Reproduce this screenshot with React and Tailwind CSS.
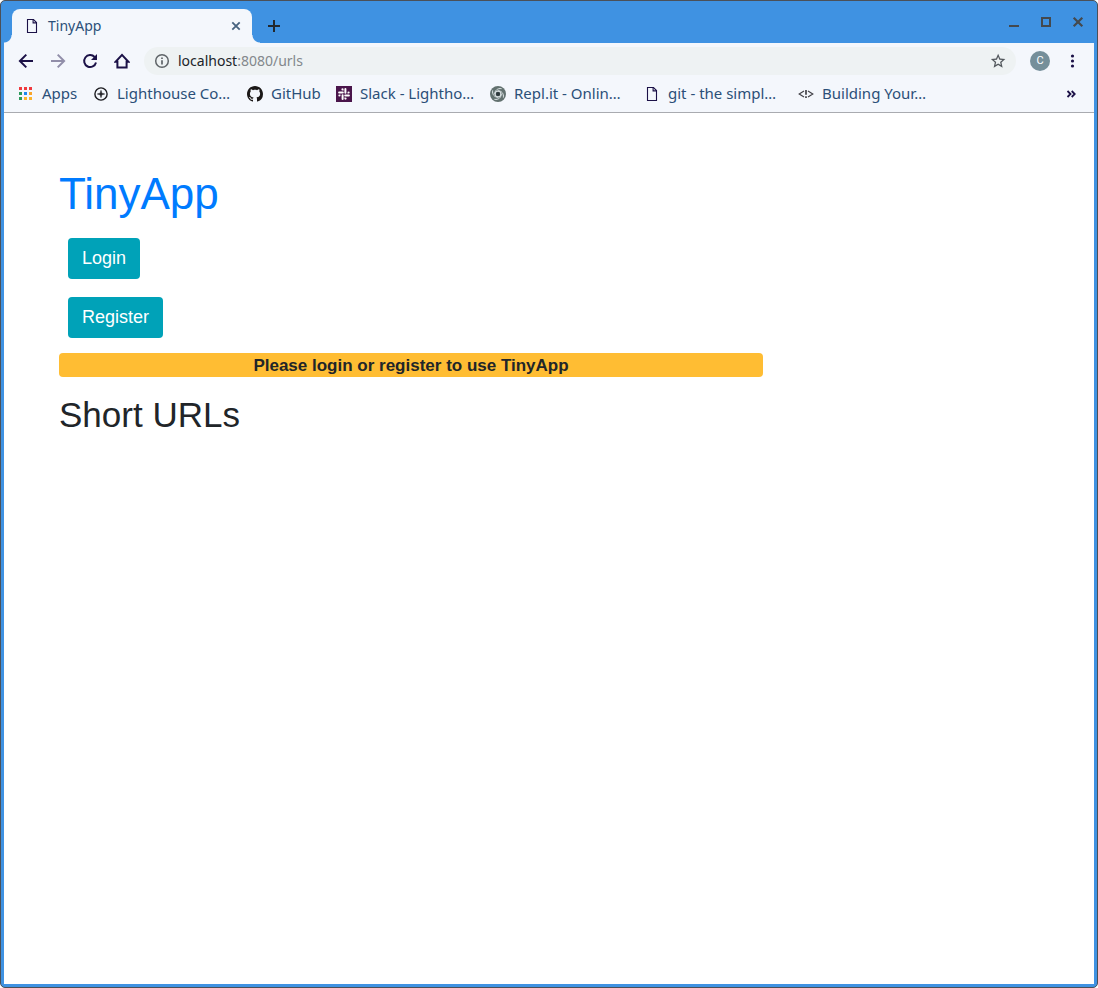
import React from "react";

const NAVY = "#1b1147";

function FileIcon() {
  return (
    <svg width="16" height="16" viewBox="0 0 16 16" fill="none" stroke={NAVY} strokeWidth="1.1" className="shrink-0">
      <path d="M3.5 1.5h6l3 3v10h-9z" />
      <path d="M9.1 1.6v3.3h3.3" />
    </svg>
  );
}

function AppsIcon() {
  const colors = [
    "#f03a3e", "#f03a3e", "#f03a3e",
    "#2c9a5b", "#1e88f0", "#f9a52b",
    "#2c9a5b", "#fbb42c", "#fbb42c",
  ];
  return (
    <svg width="16" height="16" viewBox="0 0 16 16" className="shrink-0">
      {colors.map((c, i) => (
        <rect key={i} x={1 + (i % 3) * 5} y={1 + Math.floor(i / 3) * 5} width="3" height="3" fill={c} />
      ))}
    </svg>
  );
}

function CompassIcon() {
  return (
    <svg width="16" height="16" viewBox="0 0 16 16" className="shrink-0">
      <circle cx="8" cy="8" r="6.1" fill="none" stroke="#1c1c20" strokeWidth="1.4" />
      <path d="M8 4.3l.8 2.9 2.9.8-2.900.8-.8 2.900-.8-2.900L4.300 8l2.900-.8z" fill="#1c1c20" stroke="#1c1c20" strokeWidth=".5" />
    </svg>
  );
}

function GitHubIcon() {
  return (
    <svg width="16" height="16" viewBox="0 0 16 16" fill="#1b1817" className="shrink-0">
      <path d="M8 0C3.58 0 0 3.58 0 8c0 3.54 2.29 6.53 5.47 7.59.4.07.55-.17.55-.38 0-.19-.01-.82-.01-1.49-2.01.37-2.53-.49-2.69-.94-.09-.23-.48-.94-.82-1.13-.28-.15-.68-.52-.01-.53.63-.01 1.08.58 1.23.82.72 1.21 1.87.87 2.33.66.07-.52.28-.87.51-1.07-1.78-.2-3.64-.89-3.64-3.95 0-.87.31-1.59.82-2.15-.08-.2-.36-1.02.08-2.12 0 0 .67-.21 2.2.82.64-.18 1.32-.27 2-.27s1.36.09 2 .27c1.53-1.04 2.2-.82 2.2-.82.44 1.1.16 1.92.08 2.12.51.56.82 1.27.82 2.15 0 3.07-1.87 3.75-3.65 3.95.29.25.54.73.54 1.48 0 1.07-.01 1.93-.01 2.2 0 .21.15.46.55.38A8.01 8.01 0 0 0 16 8c0-4.42-3.58-8-8-8z" />
    </svg>
  );
}

function SlackIcon() {
  return (
    <svg width="16" height="16" viewBox="0 0 16 16" className="shrink-0">
      <rect width="16" height="16" fill="#4a154b" />
      <g stroke="#fff" strokeWidth="2" strokeLinecap="round">
        <path d="M3.1 6.600h3.700M9.400 3.100v3.700M9.200 9.400h3.700M6.600 9.200v3.700" />
      </g>
      <g fill="#fff">
        <path d="M7.600 4.500H6.500a1.100 1.100 0 1 1 1.100-1.100z" />
        <path d="M11.500 7.600V6.500a1.100 1.100 0 1 1 1.100 1.100z" />
        <path d="M8.400 11.500h1.100a1.100 1.100 0 1 1-1.100 1.100z" />
        <path d="M4.500 8.400v1.100a1.100 1.100 0 1 1-1.100-1.100z" />
      </g>
    </svg>
  );
}

function ReplitIcon() {
  return (
    <svg width="16" height="16" viewBox="0 0 16 16" fill="none" className="shrink-0">
      <circle cx="8" cy="8" r="8" fill="#62716f" />
      <g stroke="#dfe6e8" strokeWidth="1" strokeLinecap="round">
        <path d="M4.700 8C4.700 4.500 7.500 2 11.200 2.600" />
        <path d="M8 4.700c3.500 0 6 2.800 5.400 6.500" />
        <path d="M11.300 8c0 3.500-2.800 6-6.500 5.400" />
        <path d="M8 11.300c-3.500 0-6-2.800-5.400-6.500" />
      </g>
      <circle cx="8" cy="8" r="2.900" stroke="#dfe6e8" strokeWidth="1" />
      <circle cx="8" cy="8" r="2" fill="#2d383b" />
    </svg>
  );
}

function TagIcon() {
  return (
    <svg width="16" height="16" viewBox="0 0 16 16" fill="none" stroke="#424248" strokeWidth="1.2" className="shrink-0">
      <path d="M6 4.900L1.200 8 6 11.100M10 4.900L14.800 8 10 11.100" />
      <path d="M8 4v4.800M8 10.200v1.900" strokeWidth="1.700" />
    </svg>
  );
}

function NavButton({ label, faded, children }) {
  return (
    <button type="button" aria-label={label} className={faded ? "opacity-45" : ""}>
      <svg width="16" height="16" viewBox="0 0 16 16" fill="none" stroke={NAVY} strokeWidth="2">
        {children}
      </svg>
    </button>
  );
}

const bookmarks = [
  { label: "Apps", Icon: AppsIcon, width: "w-[75px]" },
  { label: "Lighthouse Co…", Icon: CompassIcon, width: "w-[154px]" },
  { label: "GitHub", Icon: GitHubIcon, width: "w-[89px]" },
  { label: "Slack - Lightho…", Icon: SlackIcon, width: "w-[154px]" },
  { label: "Repl.it - Onlin…", Icon: ReplitIcon, width: "w-[154px]" },
  { label: "git - the simpl…", Icon: FileIcon, width: "w-[154px]" },
  { label: "Building Your…", Icon: TagIcon, width: "w-[154px]" },
];

function TitleBar() {
  return (
    <header className="flex h-[41px] items-end justify-between pl-2 pr-2">
      <div className="flex h-full items-end">
        <div className="relative flex h-[34px] w-[240px] items-center gap-2 rounded-t-lg bg-[#f4f7fc] pl-3 pr-2">
          <span className="absolute bottom-0 -left-2 size-2 bg-[radial-gradient(circle_at_0_0,#3f92e2_7px,#f4f7fc_8px)]" />
          <span className="absolute bottom-0 -right-2 size-2 bg-[radial-gradient(circle_at_100%_0,#3f92e2_7px,#f4f7fc_8px)]" />
          <FileIcon />
          <span className="flex-1 pb-0.5 text-[14px] text-[#2b4f78]">TinyApp</span>
          <button type="button" aria-label="Close tab">
            <svg width="16" height="16" viewBox="0 0 16 16" stroke="#46627f" strokeWidth="1.8">
              <path d="M4.300 4.300l7.400 7.400M11.700 4.300l-7.400 7.400" />
            </svg>
          </button>
        </div>
        <button type="button" aria-label="New tab" className="mb-[9px] ml-[14px]">
          <svg width="16" height="16" viewBox="0 0 16 16" stroke="#23282d" strokeWidth="2">
            <path d="M8 2v12M2 8h12" />
          </svg>
        </button>
      </div>
      <div className="flex gap-4 self-center pb-0.5">
        <button type="button" aria-label="Minimize">
          <svg width="16" height="16" viewBox="0 0 16 16" fill="#44494e">
            <rect x="3" y="11" width="10" height="2" />
          </svg>
        </button>
        <button type="button" aria-label="Maximize">
          <svg width="16" height="16" viewBox="0 0 16 16" fill="none" stroke="#44494e" strokeWidth="2">
            <rect x="4" y="4" width="8" height="8" />
          </svg>
        </button>
        <button type="button" aria-label="Close window">
          <svg width="16" height="16" viewBox="0 0 16 16" stroke="#44494e" strokeWidth="2.2">
            <path d="M3.700 3.700l8.600 8.600M12.300 3.700l-8.600 8.600" />
          </svg>
        </button>
      </div>
    </header>
  );
}

function Toolbar() {
  return (
    <div className="flex h-9 items-center justify-between gap-[14px] pl-[14px] pr-[14px]">
      <div className="flex gap-4">
        <NavButton label="Back">
          <path d="M15 8H2.400M8.300 1.600L1.900 8l6.400 6.400" />
        </NavButton>
        <NavButton label="Forward" faded>
          <path d="M1 8h12.600M7.700 1.600L14.100 8l-6.400 6.400" />
        </NavButton>
        <NavButton label="Reload">
          <path d="M12.600 4A6 6 0 1 0 14 9.500" />
          <path d="M15 1v6H9z" fill={NAVY} stroke="none" />
        </NavButton>
        <NavButton label="Home">
          <path d="M3.400 14.500V8.800H1.600L8 1.900l6.400 6.900h-1.800v5.700z" />
        </NavButton>
      </div>
      <div className="flex h-7 flex-1 items-center gap-2 rounded-full bg-[#eef2f3] px-[10px]">
        <svg width="16" height="16" viewBox="0 0 16 16" fill="none" stroke="#5f6468" strokeWidth="1.5">
          <circle cx="8" cy="8" r="6.300" />
          <path d="M8 7.200v4.200M8 4.400v1.500" strokeWidth="1.700" />
        </svg>
        <a href="#urls" className="flex-1 pb-0.5 text-[14px] text-[#83888c]">
          <span className="text-[#202428]">localhost</span>:8080/urls
        </a>
        <button type="button" aria-label="Bookmark this page">
          <svg width="16" height="16" viewBox="0 0 24 24" fill="#53585d">
            <path d="M23 9.100l-7.700-.7L12.200 1.200l-3.100 7.200L1.300 9.100l5.900 5.100L5.400 22l6.800-4.100L19 22l-1.800-7.800zM12.200 15.700l-4 2.400 1.100-4.600-3.500-3.100 4.600-.4 1.800-4.200 1.800 4.200 4.600.4-3.500 3.100 1.100 4.600z" />
          </svg>
        </button>
      </div>
      <div className="flex items-center gap-[14px]">
        <button type="button" aria-label="Profile" className="flex size-5 items-center justify-center rounded-full bg-[#758f9a] font-[Roboto,sans-serif] text-[11px] text-white">
          C
        </button>
        <button type="button" aria-label="Menu">
          <svg width="16" height="16" viewBox="0 0 16 16" fill={NAVY}>
            <circle cx="8.500" cy="3" r="1.600" />
            <circle cx="8.500" cy="8" r="1.600" />
            <circle cx="8.500" cy="13" r="1.600" />
          </svg>
        </button>
      </div>
    </div>
  );
}

function BookmarksBar() {
  return (
    <nav className="flex h-[34px] items-center justify-between border-b border-[#a9abb0] pb-1 pl-[14px] pr-[15px]">
      <div className="flex">
        {bookmarks.map(({ label, Icon, width }) => (
          <a key={label} href="#bookmark" className={"flex shrink-0 items-center gap-2 whitespace-nowrap text-[15px] text-[#2b4f78] " + width}>
            <Icon />
            {label}
          </a>
        ))}
      </div>
      <button type="button" aria-label="More bookmarks">
        <svg width="16" height="16" viewBox="0 0 16 16" fill="none" stroke={NAVY} strokeWidth="1.800">
          <path d="M4.500 5l3 3-3 3M8.700 5l3 3-3 3" />
        </svg>
      </button>
    </nav>
  );
}

const primaryButton = "rounded-[4px] bg-[#00a2b8] px-[14px] py-2 text-[18px] leading-[25px] text-white";

export default function App() {
  return (
    <div className="flex min-h-screen rounded-[5px] border border-[#4b5058] bg-[#3f92e2] font-['Noto_Sans',sans-serif]">
      <div className="flex flex-1 flex-col px-[3px] pt-px pb-[3px]">
        <TitleBar />
        <div className="bg-[#f4f7fc]">
          <Toolbar />
          <BookmarksBar />
        </div>
        <main className="flex-1 bg-white px-[55px] pt-[54px] font-['Liberation_Sans',Arial,sans-serif] text-[#212529]">
          <h1 className="text-[44px] leading-[53px] text-[#007bff]">TinyApp</h1>
          <div className="mt-[18px] ml-[9px] flex flex-col items-start gap-[18px]">
            <button type="button" className={primaryButton}>Login</button>
            <button type="button" className={primaryButton}>Register</button>
          </div>
          <p className="mt-[15px] max-w-[704px] rounded-[4px] bg-[#ffbd33] pt-0.5 text-center text-[17px] leading-[22px] font-bold">
            Please login or register to use TinyApp
          </p>
          <h2 className="mt-[17px] text-[35px] leading-[42px]">Short URLs</h2>
        </main>
      </div>
    </div>
  );
}
